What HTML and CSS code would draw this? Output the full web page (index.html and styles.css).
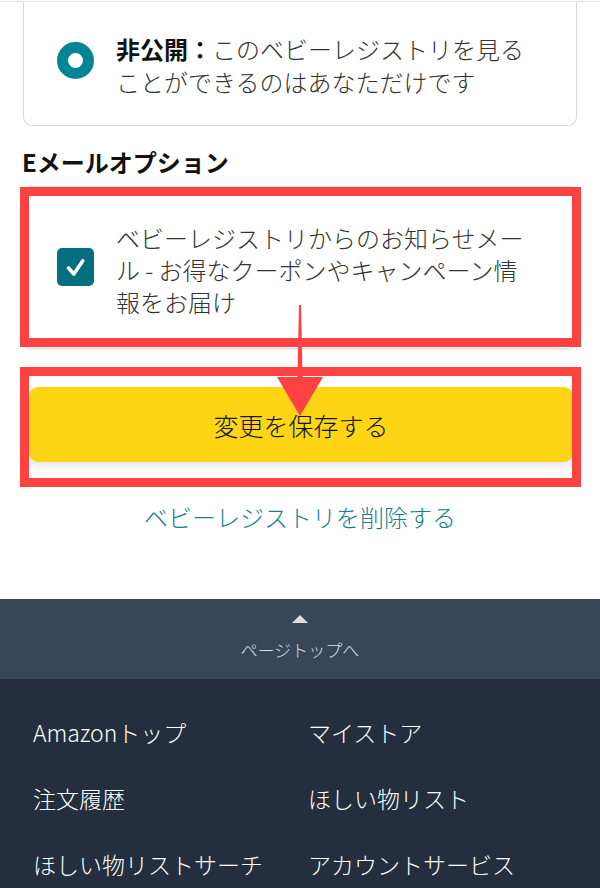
FILE: index.html
```html
<!DOCTYPE html>
<html lang="ja">
<head>
<meta charset="utf-8">
<title>ベビーレジストリ</title>
<link rel="stylesheet" href="styles.css">
</head>
<body>
<div class="topline"></div>
<div class="privacy-card">
  <span class="radio"></span>
  <p class="opt-text"><b class="opt-label">非公開：</b>このベビーレジストリを見る<br>ことができるのはあなただけです</p>
</div>
<h2 class="section-title">Eメールオプション</h2>
<div class="email-card">
  <span class="checkbox"><svg class="check" viewBox="0 0 37 38" width="37" height="38"><path d="M11.5 20 L16.8 26 L25.8 12.8" fill="none" stroke="#fff" stroke-width="3.6" stroke-linecap="round" stroke-linejoin="round"/></svg></span>
  <p class="opt-text">ベビーレジストリからのお知らせメー<br>ル - お得なクーポンやキャンペーン情<br>報をお届け</p>
</div>
<button class="save-btn" type="button">変更を保存する</button>
<a class="delete-link" href="#">ベビーレジストリを削除する</a>
<div class="spacer"></div>
<footer class="footer">
  <a class="to-top" href="#">
    <span class="to-top-arrow"></span>
    <span class="to-top-text">ページトップへ</span>
  </a>
  <nav class="footer-links">
    <a href="#">Amazonトップ</a>
    <a href="#">マイストア</a>
    <a href="#">注文履歴</a>
    <a href="#">ほしい物リスト</a>
    <a href="#">ほしい物リストサーチ</a>
    <a href="#">アカウントサービス</a>
  </nav>
</footer>

<div class="mark mark-email"></div>
<div class="mark mark-save"></div>
<svg class="arrow" viewBox="0 0 60 120" width="60" height="120">
  <polygon points="29,5 31,5 32.6,78 27.4,78" fill="#fe4141"/>
  <polygon points="7,77 53,77 30,116" fill="#fe4141"/>
</svg>
</body>
</html>
```

FILE: styles.css
```css
* { box-sizing: border-box; }

html, body {
  margin: 0;
  padding: 0;
}

body {
  position: relative;
  width: 600px;
  height: 888px;
  overflow: hidden;
  background: #fff;
  font-family: "Noto Sans CJK JP", "Noto Sans", sans-serif;
  font-weight: 300;
  color: #333;
}

.topline {
  margin-top: 1px;
  height: 1px;
  background: #e2e4e4;
}

.privacy-card {
  display: flex;
  align-items: flex-start;
  margin: 0 23px;
  padding: 30px 0 27px 33px;
  border: 1px solid #d5d9d9;
  border-top: none;
  border-radius: 0 0 9px 9px;
}

.radio {
  flex: none;
  width: 37px;
  height: 37px;
  margin-top: 10px;
  border-radius: 50%;
  border: 11px solid #018495;
  background: #fff;
}

.opt-text {
  margin: 0 0 0 22px;
  font-size: 24px;
  line-height: 33px;
  color: #333;
}

.opt-label {
  font-weight: 700;
  color: #111;
}

.section-title {
  margin: 20px 0 0 22px;
  font-size: 24px;
  line-height: 32px;
  font-weight: 700;
  color: #111;
}

.email-card {
  display: flex;
  align-items: flex-start;
  margin: 8px 23px 0;
  padding: 35px 0 30px 33px;
  border: 1px solid #dfe1e1;
  border-radius: 9px;
  box-shadow: 0 1px 2px rgba(0, 0, 0, 0.08);
}

.email-card .opt-text {
  line-height: 32px;
}

.checkbox {
  flex: none;
  width: 37px;
  height: 38px;
  margin-top: 26px;
  border-radius: 5px;
  background: #036f7f;
}

.check {
  display: block;
}

.save-btn {
  display: block;
  width: 544px;
  height: 75px;
  margin: 38px 0 0 29px;
  padding: 0;
  border: none;
  border-radius: 9px;
  background: #fdd515;
  box-shadow: 0 4px 9px rgba(40, 50, 60, 0.12);
  font-family: inherit;
  font-weight: 300;
  font-size: 25px;
  color: #111;
}

.delete-link {
  display: block;
  margin-top: 39px;
  text-align: center;
  font-size: 24px;
  line-height: 32px;
  color: #17808f;
  text-decoration: none;
}

.spacer {
  height: 66px;
}

.footer {
  background: #232f3e;
}

.to-top {
  display: flex;
  flex-direction: column;
  align-items: center;
  padding: 16px 0 17px;
  background: #37475a;
  text-decoration: none;
}

.to-top-arrow {
  width: 0;
  height: 0;
  border-left: 8px solid transparent;
  border-right: 8px solid transparent;
  border-bottom: 8px solid #ddd;
}

.to-top-text {
  margin-top: 15px;
  font-size: 17px;
  line-height: 24px;
  color: #ddd;
}

.footer-links {
  display: grid;
  grid-template-columns: 275px 1fr;
  row-gap: 34px;
  padding: 37px 0 20px 33px;
}

.footer-links a {
  font-size: 23px;
  line-height: 32px;
  color: #fff;
  text-decoration: none;
  white-space: nowrap;
}

.mark {
  position: absolute;
  left: 20px;
  width: 561px;
  border: 9px solid #fe4141;
}

.mark-email {
  top: 187px;
  height: 160px;
}

.mark-save {
  top: 367px;
  height: 120px;
}

.arrow {
  position: absolute;
  left: 270px;
  top: 300px;
}
```
